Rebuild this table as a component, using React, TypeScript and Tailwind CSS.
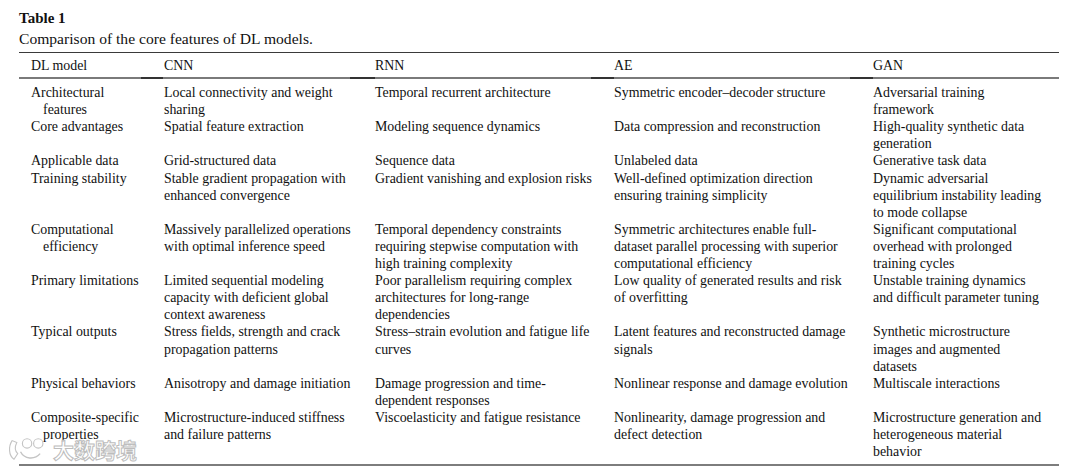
import React from "react";

type Row = string[][];

const header = ["DL model", "CNN", "RNN", "AE", "GAN"];

// Line breaks follow the typeset PDF table.
const rows: Row[] = [
  [
    ["Architectural", "features"],
    ["Local connectivity and weight", "sharing"],
    ["Temporal recurrent architecture"],
    ["Symmetric encoder–decoder structure"],
    ["Adversarial training", "framework"],
  ],
  [
    ["Core advantages"],
    ["Spatial feature extraction"],
    ["Modeling sequence dynamics"],
    ["Data compression and reconstruction"],
    ["High-quality synthetic data", "generation"],
  ],
  [
    ["Applicable data"],
    ["Grid-structured data"],
    ["Sequence data"],
    ["Unlabeled data"],
    ["Generative task data"],
  ],
  [
    ["Training stability"],
    ["Stable gradient propagation with", "enhanced convergence"],
    ["Gradient vanishing and explosion risks"],
    ["Well-defined optimization direction", "ensuring training simplicity"],
    ["Dynamic adversarial", "equilibrium instability leading", "to mode collapse"],
  ],
  [
    ["Computational", "efficiency"],
    ["Massively parallelized operations", "with optimal inference speed"],
    ["Temporal dependency constraints", "requiring stepwise computation with", "high training complexity"],
    ["Symmetric architectures enable full-", "dataset parallel processing with superior", "computational efficiency"],
    ["Significant computational", "overhead with prolonged", "training cycles"],
  ],
  [
    ["Primary limitations"],
    ["Limited sequential modeling", "capacity with deficient global", "context awareness"],
    ["Poor parallelism requiring complex", "architectures for long-range", "dependencies"],
    ["Low quality of generated results and risk", "of overfitting"],
    ["Unstable training dynamics", "and difficult parameter tuning"],
  ],
  [
    ["Typical outputs"],
    ["Stress fields, strength and crack", "propagation patterns"],
    ["Stress–strain evolution and fatigue life", "curves"],
    ["Latent features and reconstructed damage", "signals"],
    ["Synthetic microstructure", "images and augmented", "datasets"],
  ],
  [
    ["Physical behaviors"],
    ["Anisotropy and damage initiation"],
    ["Damage progression and time-", "dependent responses"],
    ["Nonlinear response and damage evolution"],
    ["Multiscale interactions"],
  ],
  [
    ["Composite-specific", "properties"],
    ["Microstructure-induced stiffness", "and failure patterns"],
    ["Viscoelasticity and fatigue resistance"],
    ["Nonlinearity, damage progression and", "defect detection"],
    ["Microstructure generation and", "heterogeneous material", "behavior"],
  ],
];

const grid = "grid grid-cols-[145px_211px_239px_259px_186px]";

function Cell({ lines, first }: { lines: string[]; first?: boolean }) {
  return (
    <div className={first ? "pl-[12px]" : ""}>
      {lines.map((l, i) => (
        <div key={i} className={`whitespace-nowrap ${first && i > 0 ? "pl-[12px]" : ""}`}>
          {l}
        </div>
      ))}
    </div>
  );
}

function Watermark() {
  return (
    <div className="absolute left-[6px] top-[435px] flex items-center gap-[3px] pointer-events-none select-none">
      <svg width="44" height="28" viewBox="0 0 46 30" fill="none">
        <path d="M6 6 C2 12 2 22 8 26 L12 20 C9 17 9 12 11 8 Z" fill="#fff" fillOpacity="0.7" stroke="#c4c4c4" strokeWidth="1.2" />
        <circle cx="22" cy="9" r="5" fill="#fff" fillOpacity="0.7" stroke="#c4c4c4" strokeWidth="1.2" />
        <circle cx="34" cy="9" r="5" fill="#fff" fillOpacity="0.7" stroke="#c4c4c4" strokeWidth="1.2" />
        <path d="M15 18 C19 26 30 27 36 20" stroke="#c4c4c4" strokeWidth="1.5" />
      </svg>
      <span className="font-['Noto_Sans_CJK_SC',sans-serif] font-bold text-[21px] leading-none text-white/80 [-webkit-text-stroke:1px_#bdbdbd]">
        大数跨境
      </span>
    </div>
  );
}

export default function App() {
  return (
    <div className="relative w-[1069px] h-[470px] bg-white overflow-hidden font-['Liberation_Serif','Times_New_Roman',serif] text-[#111]">
      <div className="pl-[19px] pt-[8px]">
        <div className="text-[15px] font-bold leading-[20px]">Table 1</div>
        <div className="text-[15.6px] leading-[21px]">Comparison of the core features of DL models.</div>

        <div className="mt-[3px] w-[1040px] text-[13.9px] leading-[17.1px]">
          <div className="h-px bg-[#3a3a3a]" />
          <div className={`${grid} pt-[4px] pb-[3px]`}>
            {header.map((h, i) => (
              <div key={h} className={i === 0 ? "pl-[12px]" : ""}>
                {h}
              </div>
            ))}
          </div>
          <div className="flex h-[2px]">
            <div className="w-[122px] bg-[#7a7a7a]" />
            <div className="w-[22px] bg-[#333]" />
            <div className="w-[187px] bg-[#7a7a7a]" />
            <div className="w-[25px] bg-[#333]" />
            <div className="w-[216px] bg-[#7a7a7a]" />
            <div className="w-[23px] bg-[#333]" />
            <div className="w-[236px] bg-[#7a7a7a]" />
            <div className="w-[23px] bg-[#333]" />
            <div className="w-[186px] bg-[#7a7a7a]" />
          </div>
          <div className="pt-[5px] pb-[4px]">
            {rows.map((r, ri) => (
              <div key={ri} className={grid}>
                {r.map((c, ci) => (
                  <Cell key={ci} lines={c} first={ci === 0} />
                ))}
              </div>
            ))}
          </div>
          <div className="h-[2px] bg-[#7d7d7d]" />
        </div>
      </div>
      <Watermark />
    </div>
  );
}
